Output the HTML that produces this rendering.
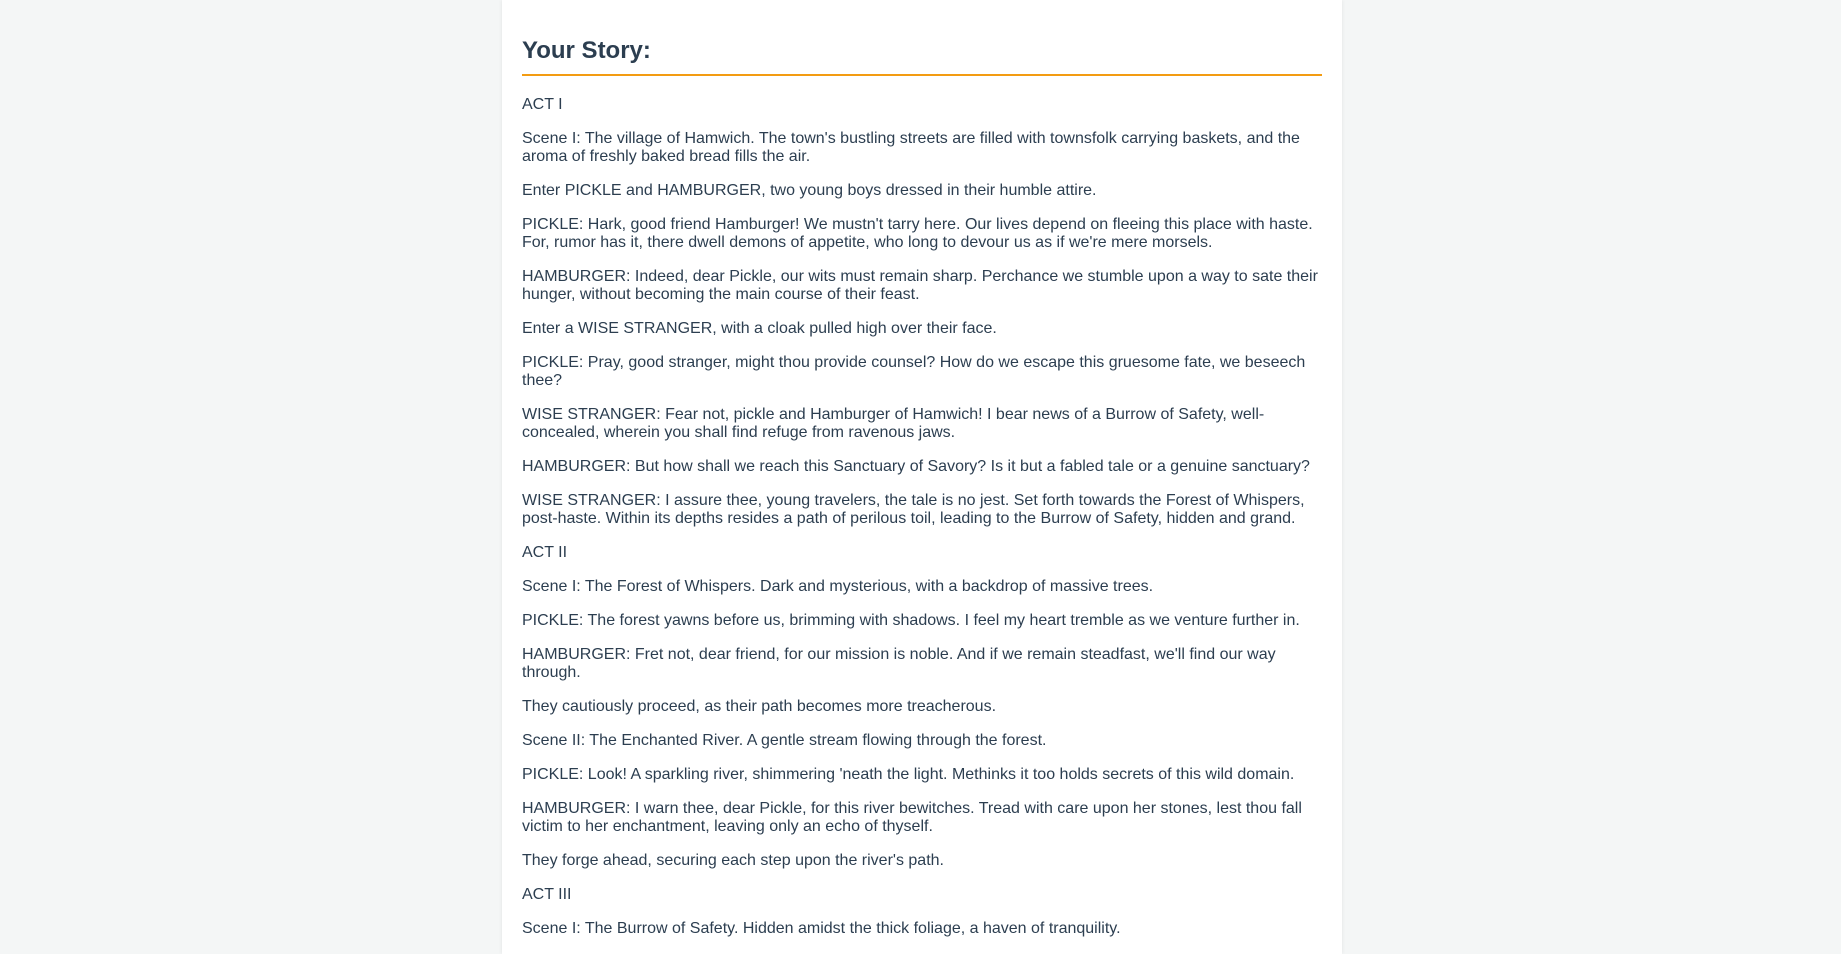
<!DOCTYPE html>
<html><head><meta charset="utf-8"><style>
html,body{margin:0;padding:0;background:#f4f6f6;}
body{font-family:"Liberation Sans",Arial,sans-serif;color:#2c3e50;height:954px;overflow:hidden;position:relative;}
.c{box-sizing:border-box;position:absolute;left:502px;width:840px;top:0;height:954px;background:#fff;padding:37px 20px 0;box-shadow:0 0 4px rgba(0,0,0,0.08);overflow:hidden;}
h2{margin:0 0 20px;font-size:24px;line-height:28px;font-weight:bold;padding-bottom:9px;border-bottom:2px solid #f39c12;}
p{margin:0 0 16px;font-size:16px;line-height:18px;}
</style></head><body><div class="c">
<h2>Your Story:</h2>
<p>ACT I</p>
<p>Scene I: The village of Hamwich. The town's bustling streets are filled with townsfolk carrying baskets, and the aroma of freshly baked bread fills the air.</p>
<p>Enter PICKLE and HAMBURGER, two young boys dressed in their humble attire.</p>
<p>PICKLE: Hark, good friend Hamburger! We mustn't tarry here. Our lives depend on fleeing this place with haste. For, rumor has it, there dwell demons of appetite, who long to devour us as if we're mere morsels.</p>
<p>HAMBURGER: Indeed, dear Pickle, our wits must remain sharp. Perchance we stumble upon a way to sate their hunger, without becoming the main course of their feast.</p>
<p>Enter a WISE STRANGER, with a cloak pulled high over their face.</p>
<p>PICKLE: Pray, good stranger, might thou provide counsel? How do we escape this gruesome fate, we beseech thee?</p>
<p>WISE STRANGER: Fear not, pickle and Hamburger of Hamwich! I bear news of a Burrow of Safety, well-concealed, wherein you shall find refuge from ravenous jaws.</p>
<p>HAMBURGER: But how shall we reach this Sanctuary of Savory? Is it but a fabled tale or a genuine sanctuary?</p>
<p>WISE STRANGER: I assure thee, young travelers, the tale is no jest. Set forth towards the Forest of Whispers, post-haste. Within its depths resides a path of perilous toil, leading to the Burrow of Safety, hidden and grand.</p>
<p>ACT II</p>
<p>Scene I: The Forest of Whispers. Dark and mysterious, with a backdrop of massive trees.</p>
<p>PICKLE: The forest yawns before us, brimming with shadows. I feel my heart tremble as we venture further in.</p>
<p>HAMBURGER: Fret not, dear friend, for our mission is noble. And if we remain steadfast, we'll find our way through.</p>
<p>They cautiously proceed, as their path becomes more treacherous.</p>
<p>Scene II: The Enchanted River. A gentle stream flowing through the forest.</p>
<p>PICKLE: Look! A sparkling river, shimmering 'neath the light. Methinks it too holds secrets of this wild domain.</p>
<p>HAMBURGER: I warn thee, dear Pickle, for this river bewitches. Tread with care upon her stones, lest thou fall victim to her enchantment, leaving only an echo of thyself.</p>
<p>They forge ahead, securing each step upon the river's path.</p>
<p>ACT III</p>
<p>Scene I: The Burrow of Safety. Hidden amidst the thick foliage, a haven of tranquility.</p>
</div></body></html>
